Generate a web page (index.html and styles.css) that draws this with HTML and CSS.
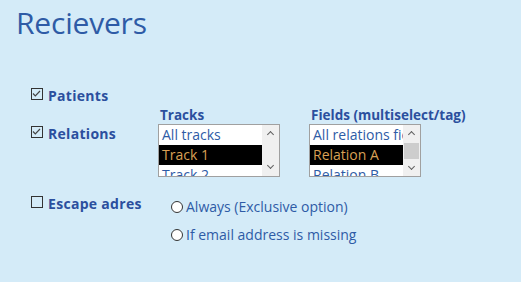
FILE: index.html
```html
<!DOCTYPE html>
<html>
<head>
  <title>Recievers</title>
  <meta charset="UTF-8">
  <link rel="stylesheet" href="styles.css">
</head>
<body>
  <div class="container">
    <h1>Recievers</h1>

    <div class="row row-patients">
      <label class="check">
        <span class="box checked"><svg width="11" height="11" viewBox="0 0 11 11"><path d="M2 5.5 L4.3 7.8 L9 3" fill="none" stroke="#444" stroke-width="1.2"/></svg></span>
        Patients
      </label>
    </div>

    <div class="row row-relations">
      <label class="check">
        <span class="box checked"><svg width="11" height="11" viewBox="0 0 11 11"><path d="M2 5.5 L4.3 7.8 L9 3" fill="none" stroke="#444" stroke-width="1.2"/></svg></span>
        Relations
      </label>
      <div class="group tracks">
        <div class="group-title">Tracks</div>
        <div class="listbox">
          <ul class="items">
            <li>All tracks</li>
            <li class="selected">Track 1</li>
            <li>Track 2</li>
          </ul>
          <div class="scrollbar">
            <span class="arrow up"></span>
            <span class="arrow down"></span>
          </div>
        </div>
      </div>
      <div class="group fields">
        <div class="group-title">Fields (multiselect/tag)</div>
        <div class="listbox">
          <ul class="items">
            <li>All relations fields</li>
            <li class="selected">Relation A</li>
            <li>Relation B</li>
          </ul>
          <div class="scrollbar">
            <span class="arrow up"></span>
            <span class="thumb"></span>
            <span class="arrow down"></span>
          </div>
        </div>
      </div>
    </div>

    <div class="row row-escape">
      <label class="check">
        <span class="box"></span>
        Escape adres
      </label>
      <div class="radios">
        <label class="radio"><span class="dot"></span>Always (Exclusive option)</label>
        <label class="radio"><span class="dot"></span>If email address is missing</label>
      </div>
    </div>
  </div>
</body>
</html>
```

FILE: styles.css
```css
html, body {
  margin: 0;
  padding: 0;
}

body {
  background-color: #d4ebf8;
  font-family: "Open Sans", "Noto Sans", sans-serif;
  color: #2b55a0;
  width: 521px;
  height: 282px;
  overflow: hidden;
}

.container {
  padding: 3px 0 0 16px;
}

h1 {
  margin: 0;
  font-size: 30px;
  font-weight: normal;
  line-height: 40px;
  color: #2e5ba6;
  letter-spacing: -0.2px;
}

.row {
  display: flex;
  align-items: flex-start;
  padding-left: 15px;
}

.row-patients {
  margin-top: 44px;
}

.row-relations {
  margin-top: 1px;
}

.row-escape {
  margin-top: 18px;
}

.check {
  display: flex;
  align-items: center;
  font-size: 14px;
  font-weight: bold;
  line-height: 18px;
  letter-spacing: 0.3px;
  color: #2b4f9e;
}

.box {
  display: inline-block;
  width: 10px;
  height: 10px;
  border: 1px solid #333;
  background: transparent;
  margin-right: 5px;
  position: relative;
  top: -2px;
}

.box svg {
  display: block;
  margin: -1px 0 0 -1px;
}

.row-relations .check {
  width: 127px;
  margin-top: 19px;
}

.row-escape .check {
  width: 140px;
}

.group-title {
  font-size: 13.5px;
  font-weight: bold;
  line-height: 18px;
  color: #2b4f9e;
  padding-left: 2px;
}

.tracks {
  width: 151px;
}

.listbox {
  display: flex;
  background: #fff;
  border: 1px solid #a0a0a0;
  height: 51px;
  overflow: hidden;
}

.tracks .listbox {
  width: 120px;
}

.fields .listbox {
  width: 110px;
}

.items {
  list-style: none;
  margin: 0;
  padding: 0;
  flex: 1;
  overflow: hidden;
  white-space: nowrap;
}

.items li {
  font-size: 14px;
  line-height: 20px;
  height: 20px;
  padding-left: 3px;
  color: #2e5ba6;
  overflow: hidden;
}

.items li.selected {
  background: #000;
  color: #d9a055;
}

.scrollbar {
  width: 17px;
  background: #f0f0f0;
  display: flex;
  flex-direction: column;
  justify-content: space-between;
  align-items: center;
}

.fields .scrollbar {
  justify-content: flex-start;
}

.arrow {
  width: 17px;
  height: 17px;
  position: relative;
}

.arrow::before {
  content: "";
  position: absolute;
  left: 6px;
  width: 4px;
  height: 4px;
  border-left: 1.5px solid #606060;
  border-top: 1.5px solid #606060;
}

.arrow.up::before {
  top: 7px;
  transform: rotate(45deg);
}

.arrow.down::before {
  top: 4px;
  transform: rotate(225deg);
}

.thumb {
  width: 15px;
  height: 17px;
  background: #cdcdcd;
  margin: 2px 0 1px;
}

.radios {
  display: flex;
  flex-direction: column;
  gap: 9px;
  margin-top: 2px;
}

.radio {
  display: flex;
  align-items: center;
  font-size: 14px;
  line-height: 19px;
  color: #2e5ba6;
}

.dot {
  display: inline-block;
  width: 10px;
  height: 10px;
  border: 1px solid #333;
  border-radius: 50%;
  background: #fff;
  margin-right: 3px;
}
```
